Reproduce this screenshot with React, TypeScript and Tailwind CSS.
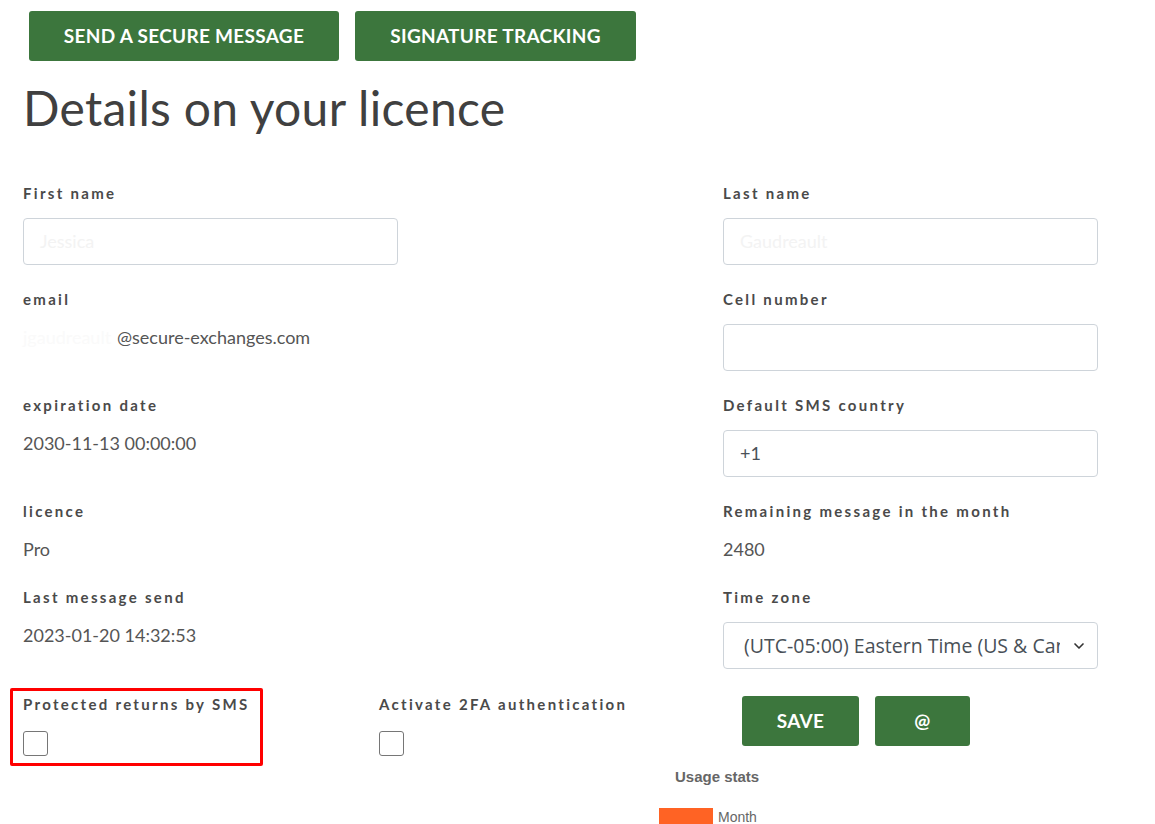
import { ChevronDown } from 'lucide-react';

type Cell =
  | { label: string; kind: 'input'; value: string; faint?: boolean }
  | { label: string; kind: 'text'; value: React.ReactNode }
  | { label: string; kind: 'select'; value: string };

const rows: [Cell, Cell][] = [
  [
    { label: 'First name', kind: 'input', value: 'Jessica', faint: true },
    { label: 'Last name', kind: 'input', value: 'Gaudreault', faint: true },
  ],
  [
    {
      label: 'email',
      kind: 'text',
      value: (
        <>
          <span className="inline-block w-[94px] text-[#fafafa]">jgaudreault</span>@secure-exchanges.com
        </>
      ),
    },
    { label: 'Cell number', kind: 'input', value: '', faint: true },
  ],
  [
    { label: 'expiration date', kind: 'text', value: '2030-11-13 00:00:00' },
    { label: 'Default SMS country', kind: 'input', value: '+1' },
  ],
  [
    { label: 'licence', kind: 'text', value: 'Pro' },
    { label: 'Remaining message in the month', kind: 'text', value: '2480' },
  ],
  [
    { label: 'Last message send', kind: 'text', value: '2023-01-20 14:32:53' },
    { label: 'Time zone', kind: 'select', value: '(UTC-05:00) Eastern Time (US & Canada)' },
  ],
];

function Label({ children }: { children: React.ReactNode }) {
  return (
    <div className="h-[20px] whitespace-nowrap text-[15px] leading-[20px] font-bold tracking-[2.3px] text-[#4a4a4a]">
      {children}
    </div>
  );
}

function Field({ cell }: { cell: Cell }) {
  if (cell.kind === 'text') {
    return (
      <div className="pb-[26px]">
        <Label>{cell.label}</Label>
        <div className="mt-[16px] h-[24px] text-[18px] leading-[24px] text-[#555]">{cell.value}</div>
      </div>
    );
  }
  if (cell.kind === 'select') {
    return (
      <div className="pb-[24px]">
        <Label>{cell.label}</Label>
        <div className="mt-[15px] flex h-[47px] w-[375px] items-center rounded-[4px] border border-[#ced4da] bg-white pl-[20px] pr-[10px]">
          <div className="w-[316px] overflow-hidden whitespace-nowrap font-['Open_Sans',sans-serif] text-[19.5px] text-[#495057]">
            {cell.value}
          </div>
          <ChevronDown className="ml-auto h-[16px] w-[16px] text-[#333]" strokeWidth={2.5} />
        </div>
      </div>
    );
  }
  return (
    <div className="pb-[24px]">
      <Label>{cell.label}</Label>
      <div
        className={`mt-[15px] flex h-[47px] w-[375px] items-center rounded-[4px] border border-[#ced4da] bg-white pl-[16px] text-[18px] ${
          cell.faint ? 'text-[#f3f3f3]' : 'text-[#495057]'
        }`}
      >
        {cell.value}
      </div>
    </div>
  );
}

function GreenButton({ children, className }: { children: React.ReactNode; className: string }) {
  return (
    <button
      className={`h-[50px] rounded-[3px] bg-[#3c763d] text-[19px] font-bold uppercase tracking-[0.3px] text-white ${className}`}
    >
      {children}
    </button>
  );
}

export default function App() {
  return (
    <div className="relative h-[824px] w-[1155px] overflow-hidden bg-white font-['Lato',sans-serif]">
      {/* Top actions */}
      <div className="flex gap-[16px] pl-[29px] pt-[11px]">
        <GreenButton className="w-[310px]">Send a secure message</GreenButton>
        <GreenButton className="w-[281px]">Signature tracking</GreenButton>
      </div>

      <h1 className="mt-[20px] pl-[23px] text-[48px] leading-[53px] tracking-[0.3px] text-[#404040]">
        Details on your licence
      </h1>

      {/* Fields */}
      <div className="mt-[49px] grid grid-cols-[700px_375px] pl-[23px]">
        {rows.map(([left, right]) => (
          <div key={left.label} className="contents">
            <Field cell={left} />
            <Field cell={right} />
          </div>
        ))}
      </div>

      {/* Options row */}
      <div className="mt-[1px] flex pl-[23px]">
        <div className="relative w-[356px]">
          <div className="absolute left-[-13px] top-[-6px] h-[78px] w-[253px] rounded-[2px] border-[3px] border-[#ff0000]" />
          <Label>Protected returns by SMS</Label>
          <div className="mt-[17px] h-[25px] w-[25px] rounded-[3px] border border-[#767676] bg-white" />
        </div>
        <div className="w-[344px]">
          <Label>Activate 2FA authentication</Label>
          <div className="mt-[17px] h-[25px] w-[25px] rounded-[3px] border border-[#767676] bg-white" />
        </div>
        <div className="ml-[19px] mt-[2px] flex gap-[16px]">
          <GreenButton className="w-[117px]">Save</GreenButton>
          <GreenButton className="w-[95px]">@</GreenButton>
        </div>
      </div>

      {/* Usage chart */}
      <div className="mt-[13px] pl-[675px] font-['Liberation_Sans',sans-serif] text-[15px] font-bold leading-[16px] text-[#666]">
        Usage stats
      </div>
      <div className="mt-[23px] flex items-start pl-[659px] font-['Liberation_Sans',sans-serif] text-[14px] leading-[16px] text-[#666]">
        <div className="h-[16px] w-[54px] bg-[#ff6324]" />
        <span className="ml-[5px] mt-[1px]">Month</span>
      </div>
    </div>
  );
}
